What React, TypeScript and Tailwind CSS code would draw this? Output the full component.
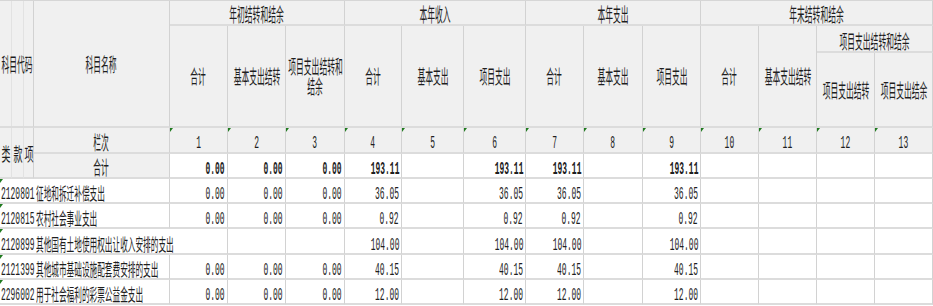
import React from 'react';

type Row = { code: string; name: string; vals: string[]; wide?: boolean };

const total = ['0.00', '0.00', '0.00', '193.11', '', '193.11', '193.11', '', '193.11', '', '', '', ''];

const rows: Row[] = [
  { code: '2120801', name: '征地和拆迁补偿支出', vals: ['0.00', '0.00', '0.00', '36.05', '', '36.05', '36.05', '', '36.05', '', '', '', ''] },
  { code: '2120815', name: '农村社会事业支出', vals: ['0.00', '0.00', '0.00', '0.92', '', '0.92', '0.92', '', '0.92', '', '', '', ''] },
  { code: '2120899', name: '其他国有土地使用权出让收入安排的支出', vals: ['', '', '', '104.00', '', '104.00', '104.00', '', '104.00', '', '', '', ''], wide: true },
  { code: '2121399', name: '其他城市基础设施配套费安排的支出', vals: ['0.00', '0.00', '0.00', '40.15', '', '40.15', '40.15', '', '40.15', '', '', '', ''] },
  { code: '2296002', name: '用于社会福利的彩票公益金支出', vals: ['0.00', '0.00', '0.00', '12.00', '', '12.00', '12.00', '', '12.00', '', '', '', ''] },
];

const cols = ['1', '2', '3', '4', '5', '6', '7', '8', '9', '10', '11', '12', '13'];

// excel "number stored as text" marker
function Tick() {
  return <span className="absolute left-0 top-0 h-0 w-0 border-t-[4px] border-r-[3px] border-t-[#1f7a1f] border-r-transparent" />;
}

function HText({ children }: { children: React.ReactNode }) {
  return <span className="inline-block scale-x-[0.41] whitespace-nowrap text-center text-[19px] leading-[20px]">{children}</span>;
}

function Num({ v, bold }: { v: string; bold?: boolean }) {
  return (
    <div className="flex items-end justify-end border-r border-b-2 border-r-[#d2d2d2] border-b-[#dcdcdc] bg-white pr-[2px]">
      <span className={`inline-block origin-right scale-x-[0.42] whitespace-nowrap font-['Liberation_Mono',monospace] text-[19px] leading-[16px] ${bold ? 'font-bold' : ''}`}>{v}</span>
    </div>
  );
}

export default function App() {
  return (
    <div className="w-[933px] bg-white font-['Noto_Sans_CJK_SC',sans-serif] text-[#1e1e1e]">
      <div className="grid grid-cols-[12px_12px_10px_136px_58px_58px_59px_57px_62px_62px_58px_59px_58px_58px_58px_58px_58px] grid-rows-[25px_27px_75px_26px_25px_25px_25px_26px_25px_25px] border-t border-t-[#d6d6d6]">
        {/* header row 1 */}
        <div className="col-span-3 row-span-3 grid grid-cols-[12px_12px_10px] border-r border-b-2 border-r-[#d2d2d2] border-b-[#dcdcdc] bg-[#f0f0f0]">
          <div className="col-start-1 row-start-1 border-r border-r-[#e2e2e2]" />
          <div className="col-start-2 row-start-1 border-r border-r-[#e2e2e2]" />
          <div className="col-start-1 col-span-3 row-start-1 flex items-center justify-center">
            <HText>科目代码</HText>
          </div>
        </div>
        <div className="row-span-3 flex items-center justify-center border-r border-b-2 border-r-[#d2d2d2] border-b-[#dcdcdc] bg-[#f0f0f0]">
          <HText>科目名称</HText>
        </div>
        <div className="col-span-3 flex items-end justify-center border-r border-b-2 border-r-[#d2d2d2] border-b-[#dcdcdc] bg-[#f0f0f0]">
          <HText>年初结转和结余</HText>
        </div>
        <div className="col-span-3 flex items-end justify-center border-r border-b-2 border-r-[#d2d2d2] border-b-[#dcdcdc] bg-[#f0f0f0]">
          <HText>本年收入</HText>
        </div>
        <div className="col-span-3 flex items-end justify-center border-r border-b-2 border-r-[#d2d2d2] border-b-[#dcdcdc] bg-[#f0f0f0]">
          <HText>本年支出</HText>
        </div>
        <div className="col-span-4 flex items-end justify-center border-r border-b-2 border-r-[#d2d2d2] border-b-[#dcdcdc] bg-[#f0f0f0]">
          <HText>年末结转和结余</HText>
        </div>

        {/* header rows 2-3 */}
        {['合计', '基本支出结转', '项目支出结转和|结余', '合计', '基本支出', '项目支出', '合计', '基本支出', '项目支出', '合计', '基本支出结转'].map((t, i) => (
          <div key={i} className="row-span-2 flex flex-col items-center justify-center border-r border-b-2 border-r-[#d2d2d2] border-b-[#dcdcdc] bg-[#f0f0f0]">
            {t.split('|').map((p, j) => (
              <HText key={j}>{p}</HText>
            ))}
          </div>
        ))}
        <div className="col-span-2 flex items-end justify-center border-r border-b-2 border-r-[#d2d2d2] border-b-[#dcdcdc] bg-[#f0f0f0]">
          <HText>项目支出结转和结余</HText>
        </div>
        <div className="flex items-center justify-center border-r border-b-2 border-r-[#d2d2d2] border-b-[#dcdcdc] bg-[#f0f0f0]">
          <HText>项目支出结转</HText>
        </div>
        <div className="flex items-center justify-center border-r border-b-2 border-r-[#d2d2d2] border-b-[#dcdcdc] bg-[#f0f0f0]">
          <HText>项目支出结余</HText>
        </div>

        {/* 栏次 row */}
        {['类', '款', '项'].map((t, i) => (
          <div key={t} className={`row-span-2 flex items-center justify-center border-b-2 border-b-[#dcdcdc] bg-[#f0f0f0] ${i < 2 ? 'border-r border-r-[#e2e2e2]' : 'border-r border-r-[#d2d2d2]'}`}>
            <span className="inline-block scale-x-[0.5] text-[18px] leading-[20px]">{t}</span>
          </div>
        ))}
        <div className="flex items-end justify-center border-r border-b-2 border-r-[#d2d2d2] border-b-[#dcdcdc] bg-[#f0f0f0]">
          <HText>栏次</HText>
        </div>
        {cols.map((c) => (
          <div key={c} className="relative flex items-end justify-center border-r border-b-2 border-r-[#d2d2d2] border-b-[#dcdcdc] bg-[#f0f0f0]">
            <Tick />
            <span className="inline-block scale-x-[0.42] font-['Liberation_Mono',monospace] text-[19px] leading-[17px]">{c}</span>
          </div>
        ))}

        {/* 合计 row */}
        <div className="flex items-end justify-center border-r border-b-2 border-r-[#d2d2d2] border-b-[#dcdcdc] bg-[#f0f0f0]">
          <HText>合计</HText>
        </div>
        {total.map((v, i) => (
          <Num key={i} v={v} bold />
        ))}

        {/* data rows */}
        {rows.map((r) => (
          <React.Fragment key={r.code}>
            <div className="relative col-span-3 flex items-end border-b-2 border-b-[#dcdcdc] bg-white pl-[1px]">
              <Tick />
              <span className="inline-block origin-left scale-x-[0.42] whitespace-nowrap font-['Liberation_Mono',monospace] text-[19px] leading-[16px]">{r.code}</span>
            </div>
            <div className={`flex items-end border-b-2 border-b-[#dcdcdc] bg-white pl-[2px] ${r.wide ? '' : 'border-r border-r-[#d2d2d2]'}`}>
              <span className="relative z-10 inline-block origin-left scale-x-[0.45] whitespace-nowrap text-[17px] leading-[19px]">{r.name}</span>
            </div>
            {r.vals.map((v, i) => (
              <Num key={i} v={v} />
            ))}
          </React.Fragment>
        ))}
      </div>
    </div>
  );
}
